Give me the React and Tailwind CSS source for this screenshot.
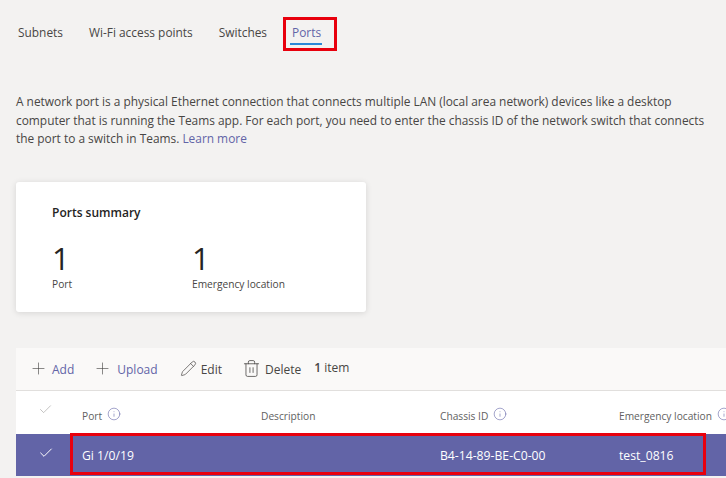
import React from 'react';
import { Plus, Pencil, Trash2, Check, Info } from 'lucide-react';

const font = 'font-["Open_Sans","Noto_Sans",sans-serif]';

const ToolButton = ({ icon: Icon, label, size, stroke, gap, className = '', link }) => (
  <div className={`flex items-center ${gap} ${className}`}>
    <Icon size={size} strokeWidth={stroke} className="text-[#484644]" />
    <span className={`pt-[2px] text-[12px] ${link ? 'text-[#6264a7]' : 'text-[#484644]'}`}>{label}</span>
  </div>
);

const HeaderCell = ({ label, info, className = '' }) => (
  <div className={`flex shrink-0 items-center gap-[5px] pt-[9px] text-[10.2px] text-[#616161] ${className}`}>
    <span>{label}</span>
    {info && <Info size={14} strokeWidth={1} className="-mt-[5px] shrink-0 text-[#6264a7]" />}
  </div>
);

const App = () => {
  return (
    <div className={`relative h-[478px] w-[726px] overflow-hidden bg-[#f3f2f1] ${font}`}>
      <div className="flex h-[64px] items-center gap-[26px] pl-[18px] pt-[1px] text-[11.9px] text-[#484644]">
        <span>Subnets</span>
        <span>Wi-Fi access points</span>
        <span>Switches</span>
        <div className="relative -ml-[1px] text-[#6264a7]">
          <span>Ports</span>
          <div className="absolute -left-[2px] -right-[1px] top-[19px] h-[2px] bg-[#2b88d8]" />
        </div>
      </div>
      <div className="absolute left-[283px] top-[17px] h-[34px] w-[54px] border-[3px] border-[#e8000d]" />

      <p className="ml-[16px] mt-[28px] w-[700px] text-[11.9px] leading-[18.5px] text-[#484644]">
        A network port is a physical Ethernet connection that connects multiple LAN (local area network) devices like a desktop computer that is running the Teams app. For each port, you need to enter the chassis ID of the network switch that connects the port to a switch in Teams. <span className="text-[#6264a7]">Learn more</span>
      </p>

      <div className="ml-[16px] mt-[34px] h-[130px] w-[350px] rounded-[3px] bg-white pl-[36px] pt-[22px] shadow-[0_1px_6px_rgba(0,0,0,0.12)]">
        <div className="text-[12px] font-semibold leading-[18px] text-[#252423]">Ports summary</div>
        <div className="mt-[18px] flex text-[#252423]">
          <div className="w-[140px]">
            <div className="text-[31px] font-medium leading-[37px]">1</div>
            <div className="text-[10.2px] leading-[14px] text-[#484644]">Port</div>
          </div>
          <div>
            <div className="text-[31px] font-medium leading-[37px]">1</div>
            <div className="text-[10.2px] leading-[14px] text-[#484644]">Emergency location</div>
          </div>
        </div>
      </div>

      <div className="ml-[16px] mt-[36px] w-[710px]">
        <div className="flex h-[43px] items-center border-b border-[#e1dfdd] bg-[#faf9f8] pl-[13px]">
          <ToolButton icon={Plus} label="Add" size={19} stroke={0.8} gap="gap-[4px]" link />
          <ToolButton icon={Plus} label="Upload" size={19} stroke={0.8} gap="gap-[5px]" link className="ml-[19px]" />
          <ToolButton icon={Pencil} label="Edit" size={17} stroke={1} gap="gap-[4px]" className="ml-[22px]" />
          <ToolButton icon={Trash2} label="Delete" size={19} stroke={1} gap="gap-[4px]" className="ml-[20px]" />
          <span className="ml-[13px] -mt-[2px] text-[12px] text-[#484644]"><b className="font-semibold">1</b> item</span>
        </div>
        <div className="flex h-[43px] items-center bg-white">
          <div className="flex w-[66px] shrink-0 justify-center pr-[7px]">
            <Check size={15} strokeWidth={1} className="-mt-[5px] text-[#a19f9d]" />
          </div>
          <HeaderCell label="Port" info className="w-[179px]" />
          <HeaderCell label="Description" className="w-[179px]" />
          <HeaderCell label="Chassis ID" info className="w-[179px]" />
          <HeaderCell label="Emergency location" info className="whitespace-nowrap" />
        </div>
        <div className="flex h-[42px] items-center bg-[#6264a7] pt-[4px] text-[12.2px] text-white">
          <div className="flex w-[66px] shrink-0 justify-center pr-[7px]">
            <Check size={16} strokeWidth={1.5} className="-mt-[8px]" />
          </div>
          <span className="w-[179px]">Gi 1/0/19</span>
          <span className="w-[179px]" />
          <span className="w-[179px]">B4-14-89-BE-C0-00</span>
          <span>test_0816</span>
        </div>
      </div>
      <div className="absolute left-[70px] top-[433px] h-[42px] w-[636px] border-[3px] border-[#e8000d]" />
    </div>
  );
};

export default App;
